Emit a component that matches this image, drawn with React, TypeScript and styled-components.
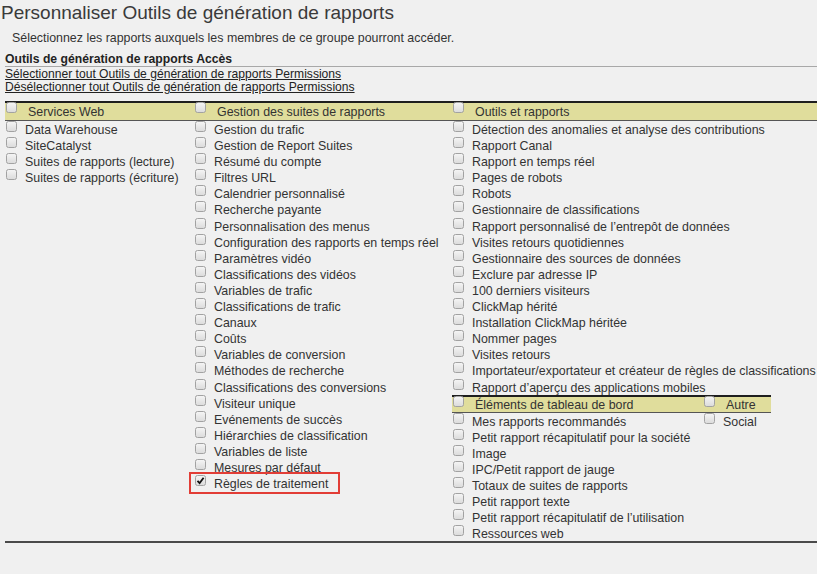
import React from "react";
import styled, { createGlobalStyle } from "styled-components";

const Global = createGlobalStyle`
  html, body { margin: 0; padding: 0; background: #f0f0f0; }
  body { font-family: "Liberation Sans", Arial, sans-serif; color: #333; }
`;

const Page = styled.div`
  width: 817px;
  height: 574px;
  overflow: hidden;
  background: #f0f0f0;
  display: flex;
  flex-direction: column;
`;

const Title = styled.h1`
  margin: 0;
  padding-left: 1px;
  font-size: 19px;
  font-weight: normal;
  line-height: 26px;
  color: #3a3a3a;
`;

const Intro = styled.p`
  margin: 4px 0 0 12px;
  font-size: 12.4px;
  line-height: 16px;
`;

const SectionHead = styled.div`
  margin: 6px 0 0 5px;
  font-size: 12.2px;
  font-weight: bold;
  line-height: 14px;
  color: #222;
  border-bottom: 1px solid #a8a8a8;
`;

const LinkList = styled.div`
  display: flex;
  flex-direction: column;
  align-items: flex-start;
  margin-left: 5px;
  padding-top: 1px;
`;

const Action = styled.a`
  font-size: 12.1px;
  line-height: 13px;
  color: #222;
  text-decoration: underline;
  cursor: pointer;
`;

const Table = styled.div`
  margin: 7px 0 0 5px;
  display: grid;
  grid-template-columns: 185px 260px 1fr;
  border-bottom: 2px solid #4a4a4a;
`;

const HeadCell = styled.div<{ $pad: number; $band?: number }>`
  display: flex;
  align-items: flex-start;
  padding-left: ${(p) => p.$pad}px;
  height: ${(p) => p.$band ?? 17}px;
  background: #e0dd9c;
  border-top: 2px solid #1e1e1e;
  border-bottom: 1px solid #555;
`;

const HeadLabel = styled.span<{ $band?: number }>`
  margin-left: 3px;
  padding-top: 1px;
  font-size: 12.4px;
  line-height: ${(p) => p.$band ?? 17}px;
  white-space: nowrap;
  color: #333;
`;

const Column = styled.div<{ $pad: number }>`
  display: flex;
  flex-direction: column;
  padding-left: ${(p) => p.$pad}px;
`;

const Row = styled.div<{ $flagged?: boolean }>`
  position: ${(p) => (p.$flagged ? "relative" : "static")};
  display: flex;
  align-items: flex-start;
  height: 16.1px;
`;

const Label = styled.span`
  padding-top: 1px;
  font-size: 12.4px;
  line-height: 16px;
  white-space: nowrap;
  color: #333;
`;

const Box = styled.span<{ $head?: boolean }>`
  flex: none;
  box-sizing: border-box;
  width: 11px;
  height: 11px;
  margin-top: ${(p) => (p.$head ? "-1px" : "0")};
  margin-right: 8px;
  border: 1px solid #a2a2a2;
  border-radius: 2.5px;
  background: linear-gradient(#f4f4f4, #dcdcdc);
  display: flex;
  align-items: center;
  justify-content: center;
`;

const Highlight = styled.span`
  position: absolute;
  left: -6px;
  top: -3px;
  bottom: -3px;
  width: 151px;
  box-sizing: border-box;
  border: 2px solid #e23d36;
  pointer-events: none;
`;

const SubTable = styled.div`
  margin-left: -1px;
  display: grid;
  grid-template-columns: 248px 71px;
  width: 319px;
`;

const Check = ({ checked, head }: { checked?: boolean; head?: boolean }) => (
  <Box $head={head}>
    {checked && (
      <svg width="9" height="9" viewBox="0 0 9 9">
        <path d="M1.5 4.8 L3.6 7 L7.6 1.8" fill="none" stroke="#111" strokeWidth="1.8" />
      </svg>
    )}
  </Box>
);

const Item = ({ text, checked, flagged }: { text: string; checked?: boolean; flagged?: boolean }) => (
  <Row $flagged={flagged}>
    <Check checked={checked} />
    <Label>{text}</Label>
    {flagged && <Highlight />}
  </Row>
);

const web = ["Data Warehouse", "SiteCatalyst", "Suites de rapports (lecture)", "Suites de rapports (écriture)"];

const suites = [
  "Gestion du trafic",
  "Gestion de Report Suites",
  "Résumé du compte",
  "Filtres URL",
  "Calendrier personnalisé",
  "Recherche payante",
  "Personnalisation des menus",
  "Configuration des rapports en temps réel",
  "Paramètres vidéo",
  "Classifications des vidéos",
  "Variables de trafic",
  "Classifications de trafic",
  "Canaux",
  "Coûts",
  "Variables de conversion",
  "Méthodes de recherche",
  "Classifications des conversions",
  "Visiteur unique",
  "Evénements de succès",
  "Hiérarchies de classification",
  "Variables de liste",
  "Mesures par défaut",
];

const tools = [
  "Détection des anomalies et analyse des contributions",
  "Rapport Canal",
  "Rapport en temps réel",
  "Pages de robots",
  "Robots",
  "Gestionnaire de classifications",
  "Rapport personnalisé de l’entrepôt de données",
  "Visites retours quotidiennes",
  "Gestionnaire des sources de données",
  "Exclure par adresse IP",
  "100 derniers visiteurs",
  "ClickMap hérité",
  "Installation ClickMap héritée",
  "Nommer pages",
  "Visites retours",
  "Importateur/exportateur et créateur de règles de classifications",
  "Rapport d’aperçu des applications mobiles",
];

const dashboard = [
  "Mes rapports recommandés",
  "Petit rapport récapitulatif pour la société",
  "Image",
  "IPC/Petit rapport de jauge",
  "Totaux de suites de rapports",
  "Petit rapport texte",
  "Petit rapport récapitulatif de l’utilisation",
  "Ressources web",
];

export default function App() {
  return (
    <Page>
      <Global />
      <Title>Personnaliser Outils de génération de rapports</Title>
      <Intro>Sélectionnez les rapports auxquels les membres de ce groupe pourront accéder.</Intro>
      <SectionHead>Outils de génération de rapports Accès</SectionHead>
      <LinkList>
        <Action>Sélectionner tout Outils de génération de rapports Permissions</Action>
        <Action>Désélectionner tout Outils de génération de rapports Permissions</Action>
      </LinkList>
      <Table>
        <HeadCell $pad={1}>
          <Check head />
          <HeadLabel>Services Web</HeadLabel>
        </HeadCell>
        <HeadCell $pad={5}>
          <Check head />
          <HeadLabel>Gestion des suites de rapports</HeadLabel>
        </HeadCell>
        <HeadCell $pad={3}>
          <Check head />
          <HeadLabel>Outils et rapports</HeadLabel>
        </HeadCell>

        <Column $pad={1}>
          {web.map((t) => (
            <Item key={t} text={t} />
          ))}
        </Column>
        <Column $pad={5}>
          {suites.map((t) => (
            <Item key={t} text={t} />
          ))}
          <Item text="Règles de traitement" checked flagged />
        </Column>
        <Column $pad={3}>
          {tools.map((t) => (
            <Item key={t} text={t} />
          ))}
          <SubTable>
            <HeadCell $pad={1} $band={15}>
              <Check head />
              <HeadLabel $band={15}>Éléments de tableau de bord</HeadLabel>
            </HeadCell>
            <HeadCell $pad={4} $band={15}>
              <Check head />
              <HeadLabel $band={15}>Autre</HeadLabel>
            </HeadCell>
            <Column $pad={1}>
              {dashboard.map((t) => (
                <Item key={t} text={t} />
              ))}
            </Column>
            <Column $pad={4}>
              <Item text="Social" />
            </Column>
          </SubTable>
        </Column>
      </Table>
    </Page>
  );
}
